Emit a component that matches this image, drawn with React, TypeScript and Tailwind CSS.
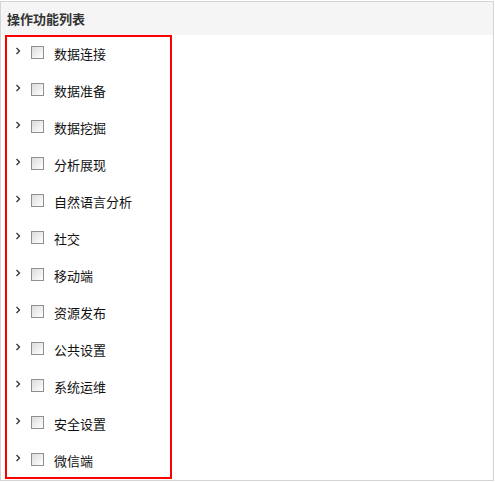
const ITEMS = [
  "数据连接",
  "数据准备",
  "数据挖掘",
  "分析展现",
  "自然语言分析",
  "社交",
  "移动端",
  "资源发布",
  "公共设置",
  "系统运维",
  "安全设置",
  "微信端",
];

function Chevron() {
  return (
    <svg width="6" height="8" viewBox="0 0 6 8" className="mt-[10px] ml-[8px] shrink-0">
      <polyline points="1.5,1 4.5,4 1.5,7" fill="none" stroke="#333" strokeWidth="1.3" />
    </svg>
  );
}

export default function App() {
  return (
    <div
      className="mt-px w-[494px] h-[480px] border border-[#d4d4d4] bg-white text-[#111]"
      style={{ fontFamily: '"Noto Sans CJK SC", "Noto Sans", sans-serif' }}
    >
      <div className="h-[33px] bg-[#f5f5f5] pl-[6px] flex items-center text-[13px] font-bold text-[#333]">
        操作功能列表
      </div>
      <div className="ml-[4px] w-[167px] h-[444px] border-2 border-[#ff0000]">
        {ITEMS.map((label) => (
          <div key={label} className="flex items-start h-[37px]">
            <Chevron />
            <span className="mt-[9px] ml-[10px] w-[13px] h-[13px] shrink-0 border border-[#8f8f8f] bg-gradient-to-br from-[#dcdcdc] to-white" />
            <span className="mt-[10px] ml-[10px] text-[13px] leading-[13px] whitespace-nowrap">{label}</span>
          </div>
        ))}
      </div>
    </div>
  );
}
